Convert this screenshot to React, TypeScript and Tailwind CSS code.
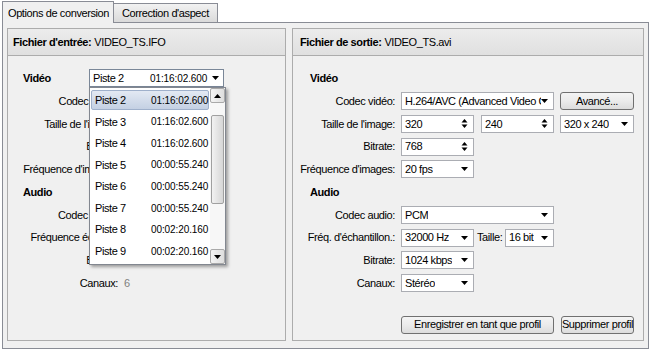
import React from 'react';

const DownArrow = () => (
    <svg width="7" height="4" viewBox="0 0 7 4" className="shrink-0">
        <path d="M0 0h7L3.5 4z" fill="#000" />
    </svg>
);

const UpArrow = () => (
    <svg width="7" height="4" viewBox="0 0 7 4" className="shrink-0">
        <path d="M0 4h7L3.5 0z" fill="#000" />
    </svg>
);

const SpinArrows = () => (
    <svg width="7" height="11" viewBox="0 0 7 11" className="shrink-0">
        <path d="M0.5 4.5h6L3.5 1z" fill="#000" />
        <path d="M0.5 6.5h6L3.5 10z" fill="#000" />
    </svg>
);

const Combo = ({ value, width }: { value: string; width: string }) => (
    <div className={`${width} h-[18px] shrink-0 bg-white border border-[#abadb3] flex items-center justify-between pl-[3px] pr-[5px]`}>
        <span className="whitespace-nowrap overflow-hidden">{value}</span>
        <DownArrow />
    </div>
);

const Spin = ({ value }: { value: string }) => (
    <div className="w-[73px] h-[18px] shrink-0 bg-white border border-[#abadb3] flex items-center justify-between pl-[3px] pr-[5px]">
        <span>{value}</span>
        <SpinArrows />
    </div>
);

const Button = ({ label, width }: { label: string; width: string }) => (
    <div className={`${width} h-[18px] shrink-0 border border-[#707070] rounded-[3px] bg-linear-to-b from-[#f4f4f4] via-[#ebebeb] to-[#dcdcdc] flex items-center justify-center whitespace-nowrap`}>
        {label}
    </div>
);

const tracks = [
    ['Piste 2', '01:16:02.600'],
    ['Piste 3', '01:16:02.600'],
    ['Piste 4', '01:16:02.600'],
    ['Piste 5', '00:00:55.240'],
    ['Piste 6', '00:00:55.240'],
    ['Piste 7', '00:00:55.240'],
    ['Piste 8', '00:02:20.160'],
    ['Piste 9', '00:02:20.160'],
];

const TrackPopup = () => (
    <div className="absolute left-0 top-[18px] z-20 w-[137px] h-[178px] bg-white border border-[#828790] flex shadow-[2px_2px_3px_rgba(0,0,0,0.35)]">
        {/* list, times are cut by the scrollbar */}
        <div className="w-[120px] pt-[1px] overflow-hidden">
            {tracks.map(([name, time], i) => (
                <div key={name} className="h-[21.6px] px-[1px] py-[1px]">
                    <div
                        className={`h-full flex items-center rounded-[2px] border whitespace-nowrap ${i === 0
                            ? 'border-[#9fb0cb] bg-linear-to-b from-[#e3e9f3] to-[#c4d0e3]'
                            : 'border-transparent'
                            }`}
                    >
                        <span className="w-[59px] pl-[3px] shrink-0">{name}</span>
                        <span className="text-[10px] tracking-[-0.1px]">{time}</span>
                    </div>
                </div>
            ))}
        </div>
        {/* scrollbar */}
        <div className="w-[15px] flex flex-col bg-[#f7f7f7]">
            <div className="h-[15px] border border-[#a9a9a9] rounded-[2px] bg-linear-to-r from-[#f4f4f4] to-[#dedede] flex items-center justify-center">
                <UpArrow />
            </div>
            <div className="h-[12px]" />
            <div className="h-[89px] mx-[1px] border border-[#a0a0a0] rounded-[2px] bg-linear-to-r from-[#f2f2f2] to-[#d6d6d6]" />
            <div className="flex-1" />
            <div className="h-[15px] border border-[#a9a9a9] rounded-[2px] bg-linear-to-r from-[#f4f4f4] to-[#dedede] flex items-center justify-center">
                <DownArrow />
            </div>
        </div>
    </div>
);

const PanelHeader = ({ title, file, pad }: { title: string; file: string; pad: string }) => (
    <div className={`h-[27px] shrink-0 border-b border-[#acacac] bg-linear-to-b from-[#ececec] to-[#e0e0e0] flex items-center ${pad}`}>
        <span className="font-bold">{title}</span>
        <span className="ml-[3px]">{file}</span>
    </div>
);

const LeftLabel = ({ label, children }: { label: string; children?: React.ReactNode }) => (
    <div className="h-[22.75px] flex items-center">
        <span className="w-[110px] text-right whitespace-nowrap">{label}</span>
        {children}
    </div>
);

const RightRow = ({ label, children }: { label: string; children: React.ReactNode }) => (
    <div className="h-[22.75px] flex items-center">
        <span className="w-[102px] text-right whitespace-nowrap">{label}</span>
        <div className="ml-[6px] flex items-center">{children}</div>
    </div>
);

export default function App() {
    return (
        <div className="w-[650px] h-[350px] bg-white overflow-hidden text-black text-[11px] tracking-[-0.4px] font-['Liberation_Sans',Arial,sans-serif]">
            {/* Tabs */}
            <div className="h-[22px] flex items-end pl-[2px]">
                <div className="relative z-10 -mb-px h-[22px] w-[112px] border border-b-0 border-[#898c95] bg-[#f0f0f0] flex items-center pl-[5px] pt-[1px]">
                    Options de conversion
                </div>
                <div className="h-[19px] w-[104px] border border-l-0 border-b-0 border-[#898c95] bg-linear-to-b from-[#f2f2f2] to-[#dadada] flex items-center pl-[8px] pt-[1px]">
                    Correction d'aspect
                </div>
            </div>

            {/* Tab page */}
            <div className="ml-[2px] w-[647px] h-[327px] border border-[#898c95] bg-[#f0f0f0] flex gap-[6px] px-[4px] pt-[5px] pb-[7px]">
                {/* Input file */}
                <div className="w-[279px] h-full border border-[#acacac] flex flex-col">
                    <PanelHeader title="Fichier d'entrée:" file="VIDEO_TS.IFO" pad="pl-[5px]" />
                    <div className="flex-1 pt-[11px]">
                        <div className="h-[22.75px] flex items-center">
                            <span className="w-[81px] pl-[15px] font-bold">Vidéo</span>
                            <div className="relative">
                                <div className="w-[135px] h-[18px] bg-white border border-[#7a8798] flex items-center pl-[3px] pr-[4px] whitespace-nowrap">
                                    <span className="w-[57px]">Piste 2</span>
                                    <span className="flex-1 text-[10px] tracking-[-0.1px]">01:16:02.600</span>
                                    <DownArrow />
                                </div>
                                <TrackPopup />
                            </div>
                        </div>
                        <LeftLabel label="Codec vidéo:" />
                        <LeftLabel label="Taille de l'image:" />
                        <LeftLabel label="Bitrate:" />
                        <LeftLabel label="Fréquence d'images:" />
                        <div className="h-[22.75px] flex items-center pl-[15px] font-bold">Audio</div>
                        <LeftLabel label="Codec audio:" />
                        <LeftLabel label="Fréquence échant.:" />
                        <LeftLabel label="Bitrate:" />
                        <LeftLabel label="Canaux:">
                            <span className="ml-[6px] text-[#7f7f7f]">6</span>
                        </LeftLabel>
                    </div>
                </div>

                {/* Output file */}
                <div className="w-[352px] h-full border border-[#acacac] flex flex-col">
                    <PanelHeader title="Fichier de sortie:" file="VIDEO_TS.avi" pad="pl-[7px]" />
                    <div className="flex-1 pt-[11px]">
                        <div className="h-[22.75px] flex items-center pl-[17px] font-bold">Vidéo</div>
                        <RightRow label="Codec vidéo:">
                            <Combo value="H.264/AVC (Advanced Video C" width="w-[153px]" />
                            <div className="ml-[6px]">
                                <Button label="Avancé..." width="w-[74px]" />
                            </div>
                        </RightRow>
                        <RightRow label="Taille de l'image:">
                            <Spin value="320" />
                            <div className="ml-[7px]"><Spin value="240" /></div>
                            <div className="ml-[6px]"><Combo value="320 x 240" width="w-[74px]" /></div>
                        </RightRow>
                        <RightRow label="Bitrate:">
                            <Spin value="768" />
                        </RightRow>
                        <RightRow label="Fréquence d'images:">
                            <Combo value="20 fps" width="w-[73px]" />
                        </RightRow>
                        <div className="h-[22.75px] flex items-center pl-[17px] font-bold">Audio</div>
                        <RightRow label="Codec audio:">
                            <Combo value="PCM" width="w-[153px]" />
                        </RightRow>
                        <RightRow label="Fréq. d'échantillon.:">
                            <Combo value="32000 Hz" width="w-[73px]" />
                            <span className="ml-[3px] w-[28px]">Taille:</span>
                            <Combo value="16 bit" width="w-[49px]" />
                        </RightRow>
                        <RightRow label="Bitrate:">
                            <Combo value="1024 kbps" width="w-[73px]" />
                        </RightRow>
                        <RightRow label="Canaux:">
                            <Combo value="Stéréo" width="w-[73px]" />
                        </RightRow>
                        <div className="mt-[21px] flex pl-[108px] gap-[7px]">
                            <Button label="Enregistrer en tant que profil" width="w-[153px]" />
                            <Button label="Supprimer profil" width="w-[73px]" />
                        </div>
                    </div>
                </div>
            </div>
        </div>
    );
}
